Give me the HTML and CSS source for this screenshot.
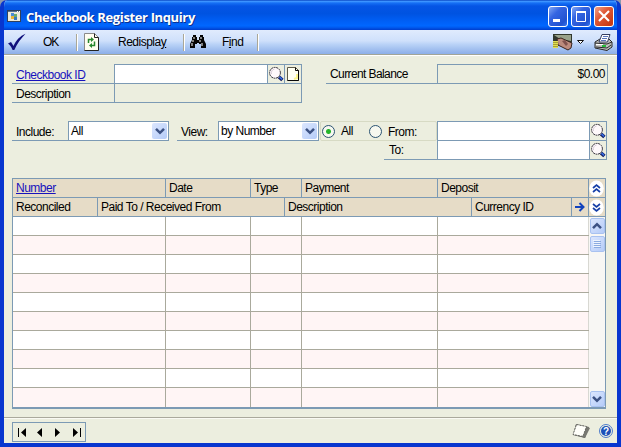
FILE: index.html
```html
<!DOCTYPE html>
<html lang="en">
<head>
<meta charset="utf-8">
<title>Checkbook Register Inquiry</title>
<link rel="stylesheet" href="styles.css">
</head>
<body>
<svg class="defs" width="0" height="0">
  <symbol id="lens" viewBox="0 0 16 16"><circle cx="7" cy="6.8" r="5.4" fill="#fff9fb" stroke="#302c38" stroke-width="1" stroke-dasharray="2 .6"/><path d="M3.5 8a4 4 0 0 1 3-5" fill="none" stroke="#d8ccd8"/><path d="M11 11l3.4 3" stroke="#10185c" stroke-width="3.6"/><path d="M11.5 11l2.6 2.3" stroke="#3468dc" stroke-width="1.7"/></symbol>
  <symbol id="chev" viewBox="0 0 10 8"><path d="M1 1.8l4 4 4-4" fill="none" stroke="#3c5284" stroke-width="2.5"/></symbol>
</svg>
<div class="window">
  <header class="titlebar">
    <svg class="app-icon" width="14" height="12" viewBox="0 0 14 12" shape-rendering="crispEdges"><path d="M0 0h14v12H0z" fill="#30405c"/><path d="M1 1h12v10H1z" fill="#ece8d8"/><path d="M1 1h12v1H1z" fill="#557095"/><path d="M10 1h1v1h-1zM12 1h1v1h-1z" fill="#fff"/><path d="M4 3h3v3H4z" fill="#488bd8"/><path d="M7 4h3v3H7z" fill="#68a870"/><path d="M4 6h3v3H4z" fill="#e9b436"/><path d="M7 7h3v3H7z" fill="#3777be"/></svg>
    <h1>Checkbook Register Inquiry</h1>
    <div class="controls">
      <span class="ctl"><svg width="20" height="20"><path d="M5 13h7v3H5z" fill="#fff"/></svg></span>
      <span class="ctl"><svg width="20" height="20"><path d="M5.5 6h9v9.5h-9z" fill="none" stroke="#fff"/><path d="M5 5h10v2H5z" fill="#fff"/></svg></span>
      <span class="ctl close"><svg width="20" height="20"><path d="M5 5l10 10M15 5L5 15" stroke="#fff" stroke-width="2.1"/></svg></span>
    </div>
  </header>
  <nav class="toolbar">
    <svg class="check" width="20" height="18" viewBox="0 0 20 18"><path d="M1 10.500l3-1.500 2.500 4C9 7.500 13 3 18.500.8 14 5.500 10 11 7.300 17H5.600C4.500 14 3 12 1 10.500z" fill="#10107c"/></svg>
    <span class="tool ok">OK</span><i class="sep"></i>
    <svg class="refresh" width="16" height="18" viewBox="0 0 16 18"><path d="M.5.5h10l4 4v13H.5z" fill="#fffdf0" stroke="#8a8a8a"/><path d="M10.500.5v4h4M14.500 4.500v13H.5" fill="none" stroke="#222"/><path d="M4.500 10V6.500h3M10.500 8.500v4h-3" fill="none" stroke="#27862c" stroke-width="1.500"/><path d="M7 4l3 2.500L7 9zM8 10l-3 2.500L8 15z" fill="#27862c"/></svg>
    <span class="tool redisplay">Redispla<u>y</u></span><i class="sep"></i>
    <svg class="binoc" width="16" height="14" viewBox="0 0 16 14"><path d="M3 0h3v2h1v3h2V2h1V0h3v2h1v3l2 4v4h-5V9H9V8H7v1H5v4H0V9l2-4V2h1z" fill="#050505"/><path d="M4 2v2M3 5v2M2 8v3M11 2v2M10 5v2M12 8v3" stroke="#fff"/></svg>
    <span class="tool find">F<u>i</u>nd</span><i class="sep"></i>
    <div class="toolbar-right">
      <svg width="20" height="17" viewBox="0 0 20 17"><path d="M0 0h19v9L12 13 0 11z" fill="#30372d"/><path d="M1 1h17v6L7 5z" fill="#99a28b"/><path d="M4 5l4-1 11 5-1 5-3 2L5 11z" fill="#bd8b7d" stroke="#39251e"/><path d="M9 7l3-1 3 4-2 2z" fill="#81524d"/><path d="M0 7h5v7H0z" fill="#e2df54"/><path d="M0 8.500h5M0 10.500h5M0 12.500h5" stroke="#8e872a" stroke-width=".7"/></svg>
      <svg class="drop" width="7" height="5"><path d="M.5.5h6l-3 3z" fill="#fff" stroke="#111"/></svg>
      <svg width="19" height="17" viewBox="0 0 19 17"><path d="M1 8l5-3h9l3 3v5l-5 3.500L1 14z" fill="#bfc0bd" stroke="#282828"/><path d="M5 8l3-7.500h8L13.500 8z" fill="#fff" stroke="#353d60"/><path d="M9 2.500h5M8 4.500h5M7 6.500h5" stroke="#5a74b8"/><path d="M1 9l12 1 5-2M2 13l11 1 4-3" fill="none" stroke="#292929"/><path d="M2 10.500h7" stroke="#fff"/><path d="M8 12h4" stroke="#26b93a" stroke-width="2"/></svg>
    </div>
  </nav>
  <main>
    <section class="ids">
      <div class="book">
        <div class="line"><label class="link">Checkbook ID</label><span class="white entry"></span><span class="btn lookup"><svg width="16" height="16"><use href="#lens"/></svg></span><span class="btn note"><svg width="12" height="14"><path d="M.5.5h8l3 3v10H.5z" fill="#fffff2" stroke="#5c5948"/><path d="M8.500.5v3h3v10H.5" fill="none" stroke="#080808"/><path d="M7 12l3-1V7" fill="none" stroke="#fbf58c" stroke-width="2"/></svg></span></div>
        <div class="line second"><label>Description</label><span class="desc-value"></span></div>
      </div>
      <div class="balance"><label>Current Balance</label><output>$0.00</output></div>
    </section>
    <section class="filters">
      <label class="include-label">Include:</label>
      <div class="select"><span>All</span><b><svg width="10" height="8"><use href="#chev"/></svg></b></div>
      <label class="view-label">View:</label>
      <div class="select view"><span>by Number</span><b><svg width="10" height="8"><use href="#chev"/></svg></b></div>
      <div class="range">
        <div class="radios"><i class="radio on"></i><span class="all">All</span><i class="radio second-radio"></i><span class="from">From:</span></div>
        <div class="to">To:</div>
      </div>
      <div class="lookups">
        <div><span class="white"></span><i><svg width="16" height="16"><use href="#lens"/></svg></i></div>
        <div><span class="white"></span><i><svg width="16" height="16"><use href="#lens"/></svg></i></div>
      </div>
    </section>
    <section class="table">
      <div class="head head1"><span class="link">Number</span><span>Date</span><span>Type</span><span>Payment</span><span>Deposit</span><span class="round"><svg width="15" height="17"><ellipse cx="7.500" cy="8.500" rx="7.300" ry="8" fill="#fff"/><path d="M4 8l3.500-3L11 8M4 12l3.500-3 3.500 3" fill="none" stroke="#1740a8" stroke-width="1.700"/></svg></span></div>
      <div class="head head2"><span>Reconciled</span><span>Paid To / Received From</span><span>Description</span><span>Currency ID</span><span class="arrow"><svg width="10" height="10"><path d="M0 5h8M4.500 1l4 4-4 4" fill="none" stroke="#1243bd" stroke-width="2"/></svg></span><span class="round"><svg width="15" height="17"><ellipse cx="7.500" cy="8.500" rx="7.300" ry="8" fill="#fff"/><path d="M4 5l3.500 3L11 5M4 9l3.500 3L11 9" fill="none" stroke="#1740a8" stroke-width="1.700"/></svg></span></div>
      <div class="body">
        <div class="rows">
          <div class="row"><i></i><i></i><i></i><i></i><i></i></div><div class="row"><i></i><i></i><i></i><i></i><i></i></div>
          <div class="row"><i></i><i></i><i></i><i></i><i></i></div><div class="row"><i></i><i></i><i></i><i></i><i></i></div>
          <div class="row"><i></i><i></i><i></i><i></i><i></i></div><div class="row"><i></i><i></i><i></i><i></i><i></i></div>
          <div class="row"><i></i><i></i><i></i><i></i><i></i></div><div class="row"><i></i><i></i><i></i><i></i><i></i></div>
          <div class="row"><i></i><i></i><i></i><i></i><i></i></div><div class="row"><i></i><i></i><i></i><i></i><i></i></div>
        </div>
        <div class="scroll"><b><svg class="up" width="10" height="8"><use href="#chev"/></svg></b><b class="thumb"><svg width="8" height="8"><path d="M0 .5h7M0 2.500h7M0 4.500h7M0 6.500h7" stroke="#eef4fe"/><path d="M1 1.500h7M1 3.500h7M1 5.500h7M1 7.500h7" stroke="#8cabe0"/></svg></b><b class="down"><svg width="10" height="8"><use href="#chev"/></svg></b></div>
      </div>
    </section>
  </main>
  <footer>
    <div class="pager">
      <svg width="71" height="18"><path d="M5 5h1v9H5zM13 5v9l-5-4.500zM29 5v9l-5-4.500zM42 5v9l5-4.500zM60 5v9l5-4.500zM67 5h1v9h-1z"/></svg>
    </div>
    <svg class="page" width="19" height="17" viewBox="0 0 19 17"><path d="M4 1l13 3-4 11-12-3z" fill="#5c5d59"/><path d="M4.500 1.500l10 2-3.500 10-10-2z" fill="#fffffa" stroke="#656660" stroke-dasharray="2 1"/><path d="M15 4l3 1-5 10-3-1z" fill="#777871"/></svg>
    <span class="help"><span>?</span></span>
  </footer>
</div>
</body>
</html>
```
FILE: styles.css
```css
* { box-sizing: border-box; }
body { margin: 0; width: 621px; height: 447px; overflow: hidden; background: #8d98ac; font: 12px/18px "Liberation Sans", Arial, sans-serif; letter-spacing: -.5px; color: #000; }
i, b { font-style: normal; font-weight: normal; }
svg { display: block; flex: none; }
.defs { position: absolute; }
.window { width: 621px; height: 447px; display: flex; flex-direction: column; border: solid #0836cf; border-width: 0 4px 4px; border-radius: 7px 7px 0 0; overflow: hidden; background: #eceedf; }
.titlebar { height: 30px; flex: none; margin: 0 -4px; padding: 0 7px; display: flex; align-items: center; background: linear-gradient(#0b48c4 0, #3b93ff 5%, #1670f5 10%, #0555e5 20%, #0053e1 45%, #005ff5 70%, #0067ff 86%, #0058ed 92%, #003dcc 100%); }
.app-icon { margin: 2px 5px 0 0; }
h1 { flex: 1; margin: 4px 0 0; font: bold 13px/20px "Open Sans", sans-serif; letter-spacing: -.37px; white-space: nowrap; color: #fff; text-shadow: 1px 1px #0b318f; }
.controls { display: flex; gap: 3px; padding-top: 3px; }
.ctl { width: 20px; height: 21px; border: 1px solid #fff; border-radius: 3px; background: linear-gradient(135deg, #83a8f4, #3565e2 35%, #2152d0 80%, #3676ef); }
.ctl svg { margin: -1px; }
.close { background: linear-gradient(135deg, #f0a088, #df5938 40%, #c93c16 85%); }
.toolbar { height: 25px; flex: none; display: flex; align-items: center; padding-left: 3px; background: linear-gradient(#e0ebfd, #cfe0fb 45%, #b9d2f7 60%, #8fb1e9 97%); border-bottom: 1px solid #a2a596; box-shadow: 0 1px #fff; }
.tool { white-space: nowrap; }
.ok { width: 49px; padding-left: 16px; letter-spacing: -1px; }
.sep { width: 2px; height: 17px; background: #aaa797; border-right: 1px solid #fff; }
.refresh { margin-left: 6px; }
.redisplay { width: 83px; padding-left: 18px; }
.binoc { margin-left: 5px; }
.find { width: 51px; padding-left: 16px; }
.toolbar-right { margin-left: auto; display: flex; align-items: center; padding-right: 4px; }
.drop { margin: 0 10px 0 4px; }
main { padding: 9px 0 0 8px; flex: none; }
.link { color: #1712bd; text-decoration: underline; }
.ids { display: flex; align-items: flex-start; }
.book { width: 290px; }
.line { display: flex; height: 20px; border-bottom: 1px solid #7c9ab4; }
.line label { width: 102px; padding: 2px 0 0 4px; }
.line > span { border: 1px solid #7c9ab4; border-width: 1px 0 0 1px; }
.white { background: #fff; }
.entry { width: 153px; }
.lookup { width: 17px; padding-top: 1px; }
.line > .note { width: 18px; border-right-width: 1px; padding: 2px 0 0 2px; }
.second { height: 19px; }
.second label { padding-top: 1px; }
.line > .desc-value { width: 188px; border-width: 0 1px; }
.balance { margin-left: 24px; display: flex; height: 20px; }
.balance label { width: 111px; padding: 1px 0 0 4px; letter-spacing: -.6px; border-bottom: 1px solid #7c9ab4; }
output { width: 171px; border: 1px solid #7c9ab4; padding-right: 2px; text-align: right; }
.filters { display: flex; margin-top: 18px; height: 39px; align-items: flex-start; }
.filters label { height: 20px; padding: 2px 0 0 4px; border-bottom: 1px solid #7c9ab4; }
.include-label { width: 56px; }
.view-label { width: 41px; margin-left: 8px; }
.select { width: 101px; height: 20px; display: flex; justify-content: space-between; border: 1px solid #7c9ab4; background: #fff; padding: 1px 1px 1px 2px; line-height: 17px; }
.select b, .scroll b { width: 15px; height: 16px; display: grid; place-items: center; border-radius: 2px; background: linear-gradient(135deg, #dbe6fe, #b5ccf8); }
.range { width: 118px; }
.radios { margin-left: 1px; height: 20px; display: flex; align-items: center; border: 1px solid #d7dac4; border-radius: 2px; }
.radio { flex: none; width: 13px; height: 13px; border: 1px solid #2b5372; border-radius: 50%; background: #f7f8f0; margin-left: 1px; }
.on { background: radial-gradient(circle, #24b52a 0 2px, #f7f8f0 3px); }
.all { width: 33px; padding-left: 6px; }
.from { padding: 1px 0 0 6px; }
.to { height: 19px; width: 53px; margin-left: 65px; padding-left: 5px; line-height: 19px; border-bottom: 1px solid #7c9ab4; }
.lookups { width: 170px; height: 39px; border: 1px solid #7c9ab4; }
.lookups div { display: flex; height: 18px; }
.lookups div + div { height: 19px; border-top: 1px solid #7c9ab4; }
.lookups .white { width: 151px; }
.lookups i { border-left: 1px solid #7c9ab4; padding-top: 1px; }
.table { width: 594px; margin-top: 18px; border: 1px solid #7c9ab4; border-bottom-width: 2px; }
.head { height: 19px; display: grid; background: #e6dcc7; border-bottom: 1px solid #7c9ab4; line-height: 19px; }
.head2 { line-height: 18px; }
.head1 { grid-template-columns: 152px 85px 51px 136px 151px 17px; }
.head2 { grid-template-columns: 84px 187px 187px 100px 17px 17px; }
.head span { padding-left: 3px; white-space: nowrap; overflow: hidden; }
.head span + span { border-left: 1px solid #7c9ab4; }
.head .round { padding: 1px 0 0; }
.head .arrow { padding: 4px 0 0 3px; }
.body { display: flex; height: 190px; }
.rows { width: 576px; }
.row { display: grid; grid-template-columns: 153px 85px 51px 136px 151px; height: 19px; background: #fff; border-bottom: 1px solid #aaa99c; }
.row:nth-child(even) { background: #fff5f5; }
.row:last-child { border: 0; }
.row i { border-right: 1px solid #aaa99c; }
.row i:last-child { border-color: #d8d8d2; }
.scroll { flex: 1; display: flex; flex-direction: column; align-items: center; background: #f8f7f4; padding-top: 1px; gap: 2px; }
.scroll b { border: 1px solid #a9c2f0; height: 16px; }
.scroll .down { margin-top: auto; }
.up { transform: rotate(180deg); }
footer { margin-top: 8px; border-top: 1px solid #aaa99c; box-shadow: inset 0 1px #fafaf3; height: 26px; display: flex; align-items: flex-start; padding: 4px 4px 0 8px; }
.pager { width: 74px; height: 20px; border: 1px solid #7c9ab4; }
.page { margin: 1px 8px 0 auto; }
.help { width: 14px; height: 14px; margin-top: 2px; border: 1px solid #4f7dcb; border-radius: 50%; padding: 1px; }
.help span { display: block; width: 10px; height: 10px; border-radius: 50%; background: #1c50b8; color: #fff; font-weight: bold; font-size: 10px; line-height: 11px; letter-spacing: 0; text-align: center; }
```
